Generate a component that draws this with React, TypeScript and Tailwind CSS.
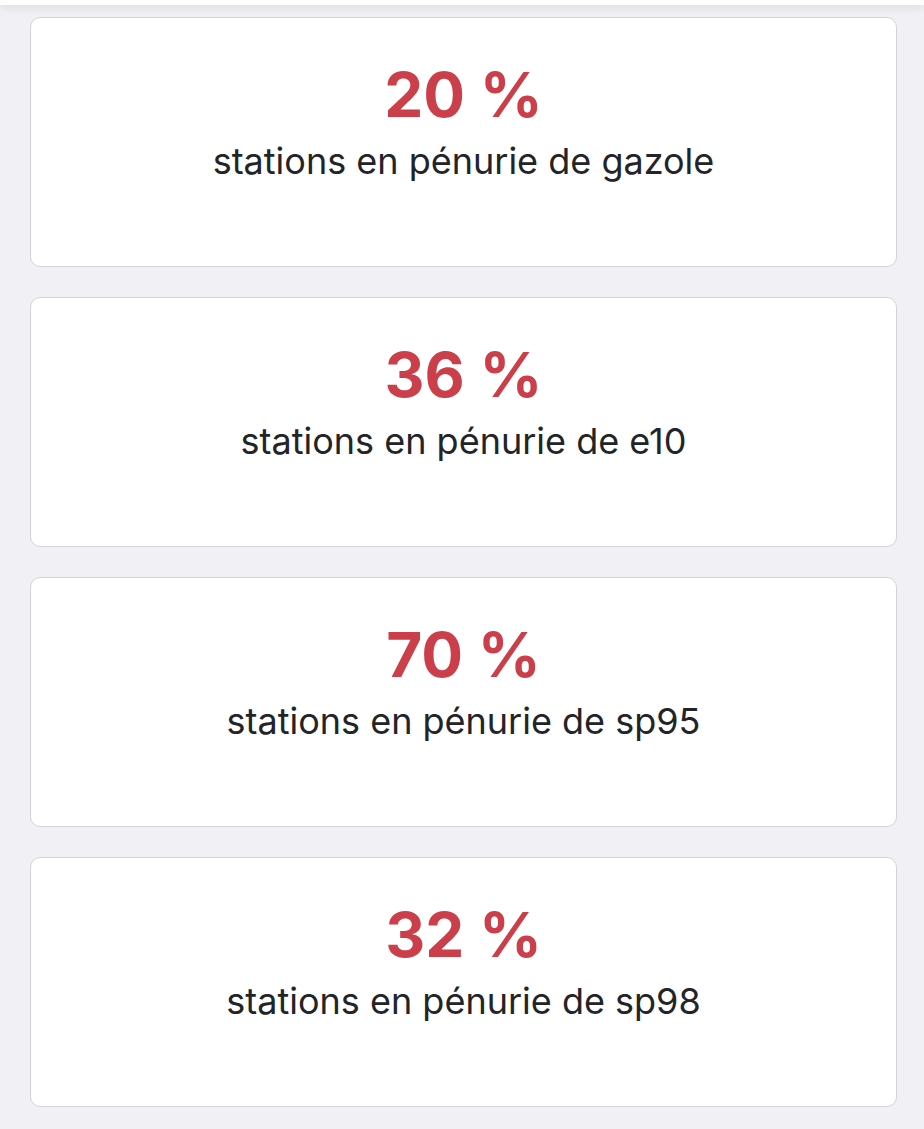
const stats = [
  { value: "20 %", fuel: "gazole" },
  { value: "36 %", fuel: "e10" },
  { value: "70 %", fuel: "sp95" },
  { value: "32 %", fuel: "sp98" },
];

export default function App() {
  return (
    <div className="min-h-[1129px] bg-[#f1f1f5]" style={{ fontFamily: "Inter, 'Noto Sans', sans-serif" }}>
      <div className="h-[5px] bg-white shadow-[0_2px_8px_rgba(0,0,0,0.12)]" />
      <div className="flex flex-col gap-[30px] pt-[12px] pb-[22px] pl-[30px] pr-[27px]">
        {stats.map((s) => (
          <div
            key={s.fuel}
            className="h-[250px] rounded-[10px] border border-[#d2d2d7] bg-white pt-[46px] text-center"
          >
            <div className="text-[62px] leading-[62px] font-bold text-[#cb3f4a]">{s.value}</div>
            <div className="mt-[15px] text-[36px] leading-[40px] text-[#222427]">
              stations en pénurie de {s.fuel}
            </div>
          </div>
        ))}
      </div>
    </div>
  );
}
